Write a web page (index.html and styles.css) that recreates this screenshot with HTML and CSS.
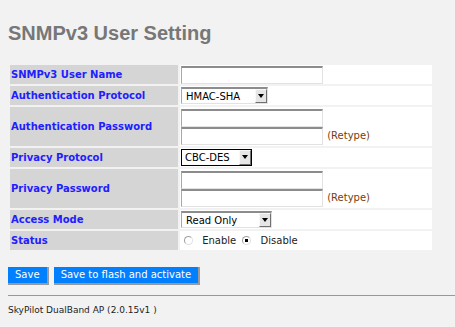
FILE: index.html
```html
<!DOCTYPE html>
<html lang="en">
<head>
  <meta charset="UTF-8">
  <title>SNMPv3 User Setting</title>
  <link rel="stylesheet" href="styles.css">
</head>
<body>
  <h1 class="page-title">SNMPv3 User Setting</h1>

  <!-- USER SETTINGS TABLE -->
  <table class="settings">
    <tr>
      <td class="label">SNMPv3 User Name</td>
      <td class="field"><input type="text" class="text-input"></td>
    </tr>
    <tr>
      <td class="label">Authentication Protocol</td>
      <td class="field">
        <span class="select-box select-auth">
          <select><option>HMAC-SHA</option><option>HMAC-MD5</option></select>
          <span class="select-arrow"></span>
        </span>
      </td>
    </tr>
    <tr class="double">
      <td class="label">Authentication Password</td>
      <td class="field">
        <input type="password" class="text-input stacked">
        <input type="password" class="text-input"> <span class="retype">(Retype)</span>
      </td>
    </tr>
    <tr>
      <td class="label">Privacy Protocol</td>
      <td class="field">
        <span class="select-box select-priv focused">
          <select><option>CBC-DES</option><option>AES</option></select>
          <span class="select-arrow"></span>
        </span>
      </td>
    </tr>
    <tr class="double">
      <td class="label">Privacy Password</td>
      <td class="field">
        <input type="password" class="text-input stacked">
        <input type="password" class="text-input"> <span class="retype">(Retype)</span>
      </td>
    </tr>
    <tr>
      <td class="label">Access Mode</td>
      <td class="field">
        <span class="select-box select-mode">
          <select><option>Read Only</option><option>Read Write</option></select>
          <span class="select-arrow"></span>
        </span>
      </td>
    </tr>
    <tr>
      <td class="label">Status</td>
      <td class="field status">
        <label><input type="radio" name="status" value="enable"> Enable</label>
        <label><input type="radio" name="status" value="disable" checked> Disable</label>
      </td>
    </tr>
  </table>

  <!-- BUTTONS -->
  <div class="buttons">
    <button type="button" class="btn">Save</button>
    <button type="button" class="btn">Save to flash and activate</button>
  </div>

  <hr class="divider">
  <div class="footer">SkyPilot DualBand AP (2.0.15v1 )</div>
</body>
</html>
```

FILE: styles.css
```css
* {
  box-sizing: border-box;
}

body {
  margin: 0;
  padding: 22px 0 0 8px;
  background-color: #f2f2f2;
  font-family: 'DejaVu Sans', Verdana, sans-serif;
}

.page-title {
  margin: 0 0 18px;
  font: bold 20px/23px 'Liberation Sans', Arial, sans-serif;
  color: #777;
}

.settings {
  width: 426px;
  border-spacing: 2px;
}

.settings td {
  height: 19px;
  padding: 0 1px;
  vertical-align: middle;
}

.settings .double td {
  height: 39px;
}

.label {
  width: 168px;
  background-color: #d5d5d5;
  color: #2020ff;
  font-size: 10px;
  font-weight: bold;
}

.field {
  background-color: white;
  font-size: 10px;
  line-height: 18px;
}

.text-input {
  width: 142px;
  height: 18px;
  margin: 0;
  padding: 0 2px;
  border-style: solid;
  border-width: 2px 1px 1px 1px;
  border-color: #8c8c8c #e2e2e2 #e2e2e2 #a8a8a8;
  background-color: white;
  vertical-align: bottom;
}

.stacked {
  display: block;
}

.retype {
  margin-left: 1px;
  color: #7a3c0a;
}

.select-box {
  position: relative;
  display: inline-block;
  vertical-align: middle;
}

.select-box select {
  appearance: none;
  -webkit-appearance: none;
  display: block;
  height: 17px;
  margin: 0;
  padding: 0 0 0 4px;
  border-style: solid;
  border-width: 2px 1px 1px 1px;
  border-color: #8c8c8c #e2e2e2 #e2e2e2 #a8a8a8;
  border-radius: 0;
  background-color: white;
  font: 10px 'DejaVu Sans', Verdana, sans-serif;
  color: black;
}

.select-auth select { width: 87px; }
.select-priv select { width: 71px; }
.select-mode select { width: 91px; }

.focused select {
  border: 1px solid black;
  padding-left: 3px;
}

.select-arrow {
  position: absolute;
  top: 2px;
  right: 1px;
  width: 12px;
  height: 14px;
  border: 1px solid;
  border-color: #f8f8f8 #707070 #707070 #f8f8f8;
  background-color: #e6e6e6;
  pointer-events: none;
}

.focused .select-arrow {
  top: 1px;
  height: 15px;
}

.select-arrow::after {
  content: '';
  position: absolute;
  left: 2px;
  top: 4px;
  border-left: 3px solid transparent;
  border-right: 3px solid transparent;
  border-top: 4px solid black;
}

.status label {
  margin-left: 3px;
  color: #222;
}

.status input[type="radio"] {
  appearance: none;
  -webkit-appearance: none;
  width: 9px;
  height: 9px;
  margin: 0 6px 0 0;
  border: 1px solid;
  border-color: #a0a0a0 #e0e0e0 #e0e0e0 #a0a0a0;
  border-radius: 50%;
  background-color: white;
  vertical-align: -1px;
}

.status input[type="radio"]:checked {
  background: radial-gradient(circle, black 0 1.5px, white 2px);
}

.buttons {
  margin-top: 11px;
}

.btn {
  height: 18px;
  margin: 0;
  padding: 0 7px;
  border-style: solid;
  border-width: 0 2px 2px 0;
  border-color: #9a9a9a;
  background-color: #0080ff;
  color: white;
  font: 10px 'DejaVu Sans', Verdana, sans-serif;
  cursor: pointer;
}

.divider {
  margin: 10px 0 0;
  border: none;
  border-top: 1px solid #999;
}

.footer {
  margin-top: 9px;
  font-size: 9px;
  color: #222;
}
```
